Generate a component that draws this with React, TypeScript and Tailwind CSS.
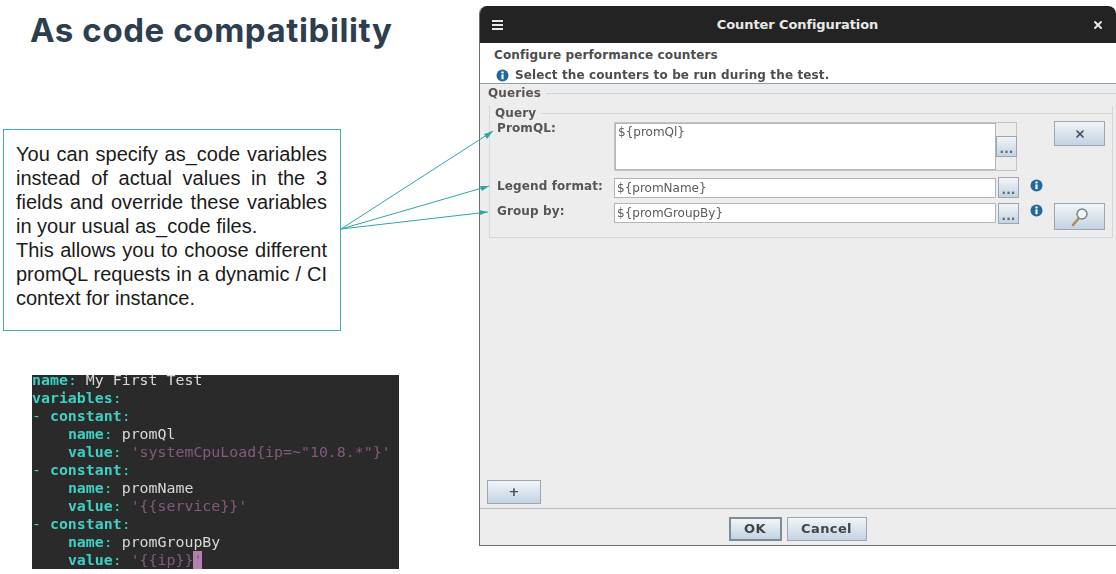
import { X } from "lucide-react";

const CODE_FONT = "font-['DejaVu_Sans_Mono',monospace]";

function InfoIcon() {
  return (
    <svg width="13" height="13" viewBox="0 0 13 13" className="shrink-0">
      <circle cx="6.5" cy="6.5" r="6" fill="#21689f" />
      <circle cx="6.5" cy="3.4" r="1.2" fill="#fff" />
      <rect x="5.4" y="5.4" width="2.2" height="4.8" fill="#fff" />
    </svg>
  );
}

function SearchIcon() {
  return (
    <svg width="20" height="20" viewBox="0 0 20 20">
      <line x1="9" y1="11" x2="3" y2="18" stroke="#b08f4e" strokeWidth="2.6" strokeLinecap="round" />
      <circle cx="12" cy="7" r="5" fill="#f2f5f6" stroke="#7d8588" strokeWidth="1.5" />
    </svg>
  );
}

function Dots({ className }: { className: string }) {
  return (
    <div
      className={`flex shrink-0 items-center justify-center border border-[color:#9aa7b2] bg-gradient-to-b from-[#f2f5f8] to-[#c3d3e2] pt-1 text-[12px] font-bold text-[#5b6b78] ${className}`}
    >
      ...
    </div>
  );
}

function Field({ value }: { value: string }) {
  return (
    <div className="flex h-[20px] w-[382px] shrink-0 items-center border border-[color:#b5b5b5] bg-white pl-[2px] text-[12px] font-normal tracking-normal text-[#5a5a5a]">
      {value}
    </div>
  );
}

function CodeLine({ k, v, indent = 0, dash = false, str = false }: { k: string; v?: string; indent?: number; dash?: boolean; str?: boolean }) {
  return (
    <div className="h-[18px] whitespace-pre">
      {dash ? <span className="text-[#3ed0c5]">- </span> : null}
      {" ".repeat(indent)}
      <span className="font-bold text-[#3ed0c5]">{k}</span>
      <span className="text-[#3ed0c5]">:</span>
      {v ? <span className={str ? "text-[#85597f]" : "text-[#d8d8d8]"}> {v}</span> : null}
    </div>
  );
}

function LeftColumn() {
  return (
    <div className="flex w-[479px] shrink-0 flex-col">
      <h1 className="ml-[30px] mt-[9px] h-[42px] whitespace-nowrap font-['Inter',sans-serif] text-[33px] font-bold leading-[42px] tracking-[0.6px] text-[#2c3e50]">
        As code compatibility
      </h1>
      <div className="ml-[3px] mt-[78px] h-[202px] w-[338px] border border-[color:#43aead] pl-[12px] pr-[13px] pt-[12px] text-justify font-['Liberation_Sans',sans-serif] text-[20px] leading-[24px] text-[#1b1b1b]">
        You can specify as_code variables instead of actual values in the 3 fields and override these variables in your usual as_code files.
        <br />
        This allows you to choose different promQL requests in a dynamic / CI context for instance.
      </div>
      <div className={`ml-[32px] mt-[44px] h-[194px] w-[367px] bg-[#2a2a2a] text-[14.9px] leading-[18px] text-[#d8d8d8] blur-[0.4px] ${CODE_FONT}`}>
        <div className="h-[14px] whitespace-pre leading-[10px]">
          <span className="font-bold text-[#3ed0c5]">name</span>
          <span className="text-[#3ed0c5]">:</span> My First Test
        </div>
        <CodeLine k="variables" />
        <CodeLine k="constant" dash />
        <CodeLine k="name" v="promQl" indent={4} />
        <CodeLine k="value" v={`'systemCpuLoad{ip=~"10.8.*"}'`} indent={4} str />
        <CodeLine k="constant" dash />
        <CodeLine k="name" v="promName" indent={4} />
        <CodeLine k="value" v="'{{service}}'" indent={4} str />
        <CodeLine k="constant" dash />
        <CodeLine k="name" v="promGroupBy" indent={4} />
        <div className="h-[18px] whitespace-pre">
          {"    "}
          <span className="font-bold text-[#3ed0c5]">value</span>
          <span className="text-[#3ed0c5]">:</span>
          <span className="text-[#85597f]"> '{"{{ip}}"}</span>
          <span className="bg-[#b57fb0] text-[#85597f]">'</span>
        </div>
      </div>
    </div>
  );
}

function CounterDialog() {
  return (
    <div className="mt-[6px] flex h-[540px] w-[637px] shrink-0 flex-col overflow-hidden rounded-t-[8px] border-b border-l border-[color:#6e6e6e] bg-[#ededed] font-['DejaVu_Sans',sans-serif] blur-[0.3px]">
      <div className="flex h-[37px] shrink-0 items-center justify-between bg-[#232323] pl-[12px] pr-[12px] pt-[1px] text-[#e8e8e8]">
        <div className="flex w-[11px] flex-col gap-[2px]">
          <div className="h-[2px] bg-[#e8e8e8]" />
          <div className="h-[2px] bg-[#e8e8e8]" />
          <div className="h-[2px] bg-[#e8e8e8]" />
        </div>
        <span className="text-[13px] font-bold tracking-[-0.1px]">Counter Configuration</span>
        <X size={12} strokeWidth={4} />
      </div>

      <div className="h-[41px] shrink-0 border-b border-[color:#8fa0ad] bg-white pl-[14px] pt-[4px] text-[12px] font-bold leading-[16px] tracking-[0.12px] text-[#4d4d4d]">
        <div>Configure performance counters</div>
        <div className="mt-[4px] flex items-center gap-[6px] pl-[2px]">
          <InfoIcon />
          <span>Select the counters to be run during the test.</span>
        </div>
      </div>

      <div className="relative flex-1 pt-[2px]">
        <div className="flex h-[14px] items-center text-[12px] font-bold tracking-[0.12px] text-[#555]">
          <div className="w-[3px] shrink-0" />
          <span className="px-[5px]">Queries</span>
          <div className="h-px flex-1 bg-[#c9d3db]" />
        </div>

        <div className="ml-[9px] mr-[3px] mt-[6px] flex h-[132px] flex-col border-b border-l border-r border-[color:#d2d8dd]">
          <div className="flex h-[14px] shrink-0 items-center text-[12px] font-bold tracking-[0.12px] text-[#555]">
            <span className="px-[5px]">Query</span>
            <div className="h-px flex-1 bg-[#d2d8dd]" />
          </div>

          <div className="mt-[2px] flex h-[50px] shrink-0 pl-[7px] text-[12px] font-bold tracking-[0.12px] text-[#555]">
            <span className="w-[117px] shrink-0 leading-[12px]">PromQL:</span>
            <div className="flex h-[49px] w-[403px] shrink-0 border border-[color:#c4c4c4]">
              <div className="h-full w-[381px] shrink-0 border border-[color:#b5b5b5] bg-white pl-[2px] text-[12px] font-normal leading-[17px] tracking-normal text-[#5a5a5a]">
                {"${promQl}"}
              </div>
              <div className="flex flex-1 flex-col justify-end pb-[13px]">
                <Dots className="h-[21px] w-[21px]" />
              </div>
            </div>
            <div className="ml-[37px] -mt-px flex h-[25px] w-[51px] shrink-0 items-center justify-center border border-[color:#9aa7b2] bg-gradient-to-b from-[#f2f5f8] to-[#c3d3e2] text-[#3f4f68]">
              <X size={12} strokeWidth={3.5} />
            </div>
          </div>

          <div className="mt-[5px] flex h-[21px] shrink-0 items-center pl-[7px] text-[12px] font-bold tracking-[0.12px] text-[#555]">
            <span className="w-[117px] shrink-0 pb-[4px]">Legend format:</span>
            <Field value={"${promName}"} />
            <Dots className="ml-[2px] h-[21px] w-[21px]" />
            <div className="ml-[11px] pb-[4px]">
              <InfoIcon />
            </div>
          </div>

          <div className="mt-[5px] flex h-[20px] shrink-0 pl-[7px] text-[12px] font-bold tracking-[0.12px] text-[#555]">
            <span className="w-[117px] shrink-0 leading-[16px]">Group by:</span>
            <Field value={"${promGroupBy}"} />
            <Dots className="ml-[2px] h-[21px] w-[21px]" />
            <div className="ml-[11px] mt-[1px]">
              <InfoIcon />
            </div>
            <div className="ml-[11px] flex h-[27px] w-[51px] shrink-0 items-center justify-center border border-[color:#9aa7b2] bg-gradient-to-b from-[#f2f5f8] to-[#c3d3e2]">
              <SearchIcon />
            </div>
          </div>
        </div>

        <div className="ml-[7px] mt-[242px] flex h-[24px] w-[54px] items-center justify-center border border-[color:#9aa7b2] bg-gradient-to-b from-[#f2f5f8] to-[#c3d3e2] text-[13px] font-bold text-[#40505e]">
          +
        </div>
      </div>

      <div className="flex h-[37px] shrink-0 items-start justify-center gap-[5px] border-t border-[color:#bdbdbd] pt-[8px] pr-[1px] text-[13px] font-bold tracking-[0.4px] text-[#444]">
        <div className="flex h-[24px] w-[53px] items-center justify-center border-2 border-[color:#7f8b96] bg-gradient-to-b from-[#f2f5f8] to-[#c3d3e2]">
          OK
        </div>
        <div className="flex h-[24px] w-[80px] items-center justify-center border border-[color:#9aa7b2] bg-gradient-to-b from-[#f2f5f8] to-[#c3d3e2]">
          Cancel
        </div>
      </div>
    </div>
  );
}

export default function App() {
  return (
    <div className="relative flex h-[574px] w-[1116px] overflow-hidden bg-white">
      <LeftColumn />
      <CounterDialog />
      {/* callout arrows lie over both columns */}
      <svg className="pointer-events-none absolute inset-0" width="1116" height="574" fill="none">
        <g stroke="#2fa5a5" strokeWidth="1">
          <line x1="341" y1="229" x2="493" y2="131" />
          <line x1="341" y1="229" x2="489" y2="186" />
          <line x1="341" y1="229" x2="488" y2="212" />
        </g>
        <g fill="#2fa5a5">
          <polygon points="493,131 484,134 487,139" />
          <polygon points="489,186 480,186 482,191" />
          <polygon points="488,212 479,210 480,215" />
        </g>
      </svg>
    </div>
  );
}
